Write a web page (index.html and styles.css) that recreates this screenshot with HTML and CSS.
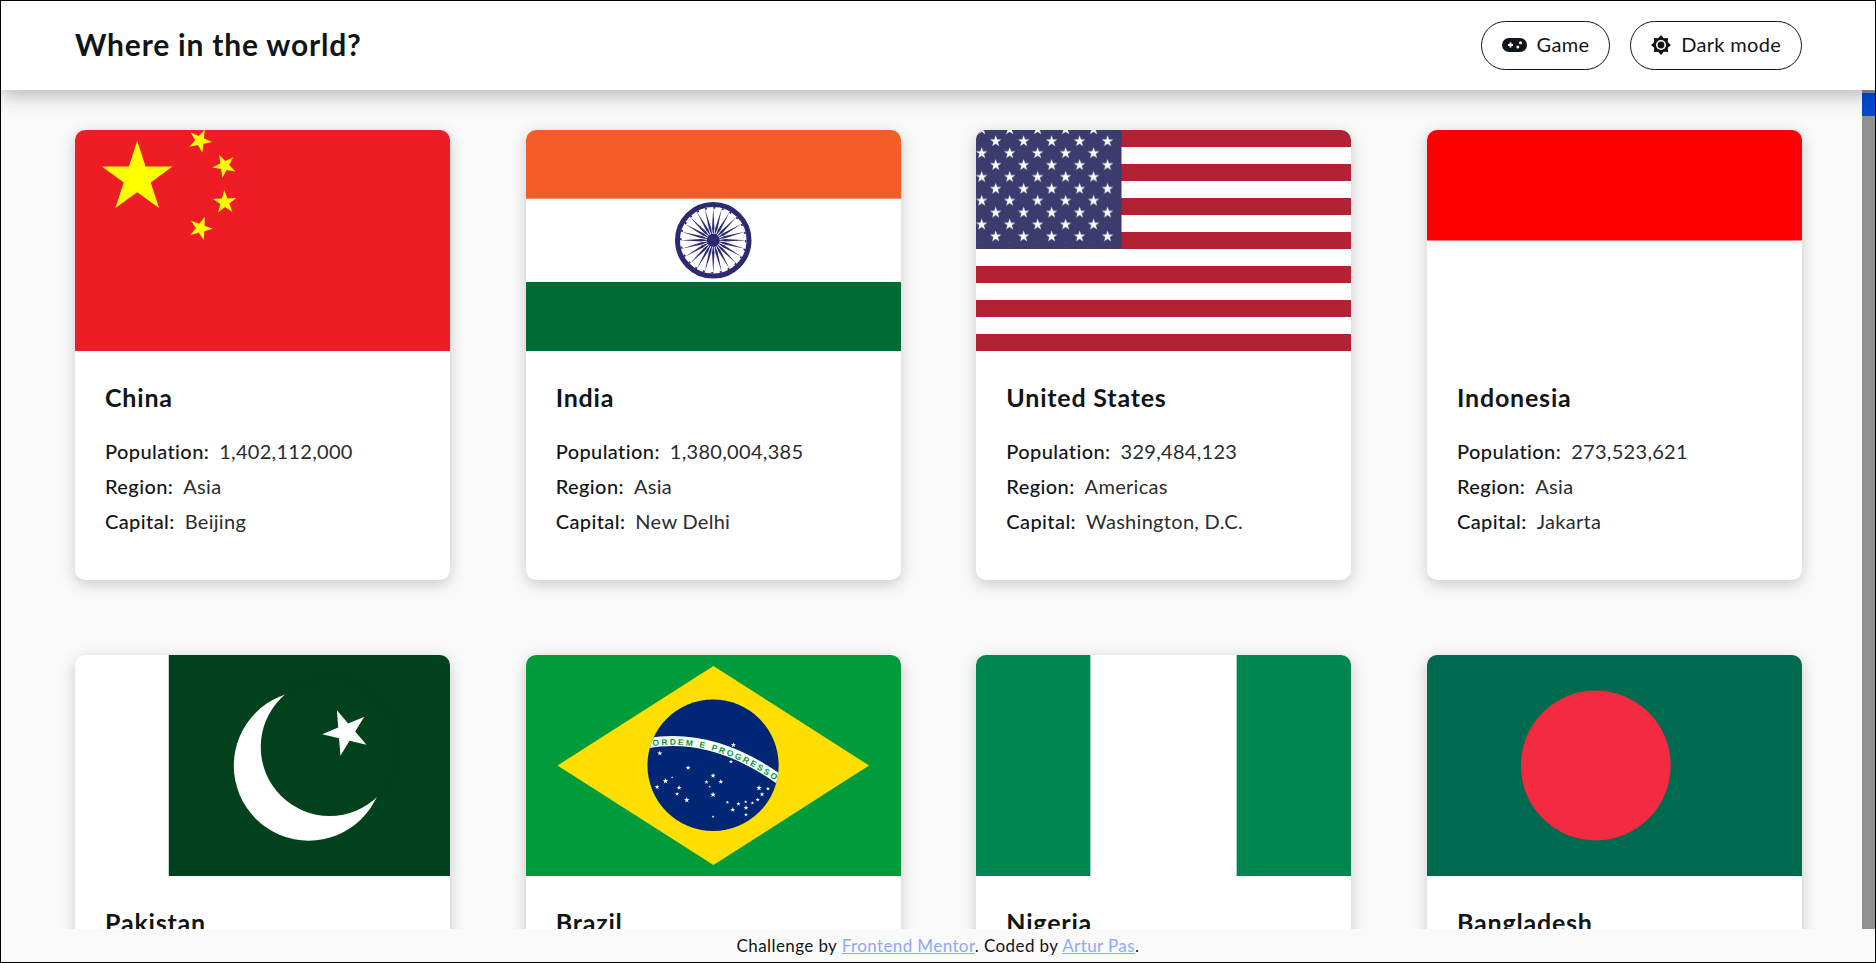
FILE: index.html
```html
<!DOCTYPE html>
<html lang="en">
<head>
    <meta charset="UTF-8">
    <meta name="viewport" content="width=device-width, initial-scale=1.0">
    <title>Where in the world?</title>
    <link rel="stylesheet" href="styles.css">
</head>
<body>

<div class="frame">
    <header class="topbar">
        <h1 class="logo">Where in the world?</h1>
        <nav class="actions">
            <button class="pill">
                <svg class="pill-icon" width="25" height="14" viewBox="0 0 25 14">
                    <rect width="25" height="14" rx="7" fill="#111517"/>
                    <path d="M6 7h5M8.5 4.5v5" stroke="#fff" stroke-width="1.8"/>
                    <circle cx="18.5" cy="4.8" r="1.5" fill="#fff"/>
                    <circle cx="15.8" cy="9" r="1.5" fill="#fff"/>
                </svg>
                Game
            </button>
            <button class="pill">
                <svg class="pill-icon" width="20" height="20" viewBox="-10 -10 20 20">
                    <polygon fill="#111517" points="0,-10 2.8,-6.8 7.1,-7.1 6.8,-2.8 10,0 6.8,2.8 7.1,7.1 2.8,6.8 0,10 -2.8,6.8 -7.1,7.1 -6.8,2.8 -10,0 -6.8,-2.8 -7.1,-7.1 -2.8,-6.8"/>
                    <circle r="5" fill="#fff"/>
                    <circle r="3.4" fill="#111517"/>
                </svg>
                Dark mode
            </button>
        </nav>
    </header>

    <div class="middle">
        <main class="content">
            <section class="grid">

                <article class="card">
                    <svg class="flag" viewBox="0 0 375.5 221" preserveAspectRatio="none">
                        <defs>
                            <polygon id="star" points="0,-1 .2245,-.309 .951,-.309 .363,.118 .588,.809 0,.382 -.588,.809 -.363,.118 -.951,-.309 -.2245,-.309"/>
                            <polygon id="spoke" points="0,-33 1.2,-12 0,-4 -1.2,-12"/>
                        </defs>
                        <rect width="375.5" height="221" fill="#ee1c25"/>
                        <g fill="#ff0">
                            <use href="#star" transform="translate(62.3 48) scale(37.2)"/>
                            <use href="#star" transform="translate(125 10.7) rotate(24) scale(12.3)"/>
                            <use href="#star" transform="translate(149.7 35.7) rotate(-26) scale(12.3)"/>
                            <use href="#star" transform="translate(150 72.3) rotate(-2.5) scale(12.3)"/>
                            <use href="#star" transform="translate(125.7 98.3) rotate(20.4) scale(12.3)"/>
                        </g>
                    </svg>
                    <div class="card-body">
                        <h2 class="country">China</h2>
                        <p class="fact"><b>Population:</b>1,402,112,000</p>
                        <p class="fact"><b>Region:</b>Asia</p>
                        <p class="fact"><b>Capital:</b>Beijing</p>
                    </div>
                </article>

                <article class="card">
                    <svg class="flag" viewBox="0 0 375.5 221" preserveAspectRatio="none">
                        <rect width="375.5" height="221" fill="#fff"/>
                        <rect width="375.5" height="68.7" fill="#f35d27"/>
                        <rect y="152" width="375.5" height="69" fill="#006b35"/>
                        <g transform="translate(187.5 110.3)" fill="#2b2a72">
                            <circle r="35.8" fill="none" stroke="#2b2a72" stroke-width="5"/>
                            <circle r="32.5" fill="none" stroke="#2b2a72" stroke-width="1.6" stroke-dasharray="2 6.5"/>
                            <circle r="6.5"/>
                            <use href="#spoke"/>
                            <use href="#spoke" transform="rotate(15)"/>
                            <use href="#spoke" transform="rotate(30)"/>
                            <use href="#spoke" transform="rotate(45)"/>
                            <use href="#spoke" transform="rotate(60)"/>
                            <use href="#spoke" transform="rotate(75)"/>
                            <use href="#spoke" transform="rotate(90)"/>
                            <use href="#spoke" transform="rotate(105)"/>
                            <use href="#spoke" transform="rotate(120)"/>
                            <use href="#spoke" transform="rotate(135)"/>
                            <use href="#spoke" transform="rotate(150)"/>
                            <use href="#spoke" transform="rotate(165)"/>
                            <use href="#spoke" transform="rotate(180)"/>
                            <use href="#spoke" transform="rotate(195)"/>
                            <use href="#spoke" transform="rotate(210)"/>
                            <use href="#spoke" transform="rotate(225)"/>
                            <use href="#spoke" transform="rotate(240)"/>
                            <use href="#spoke" transform="rotate(255)"/>
                            <use href="#spoke" transform="rotate(270)"/>
                            <use href="#spoke" transform="rotate(285)"/>
                            <use href="#spoke" transform="rotate(300)"/>
                            <use href="#spoke" transform="rotate(315)"/>
                            <use href="#spoke" transform="rotate(330)"/>
                            <use href="#spoke" transform="rotate(345)"/>
                        </g>
                    </svg>
                    <div class="card-body">
                        <h2 class="country">India</h2>
                        <p class="fact"><b>Population:</b>1,380,004,385</p>
                        <p class="fact"><b>Region:</b>Asia</p>
                        <p class="fact"><b>Capital:</b>New Delhi</p>
                    </div>
                </article>

                <article class="card">
                    <svg class="flag" viewBox="0 0 375.5 221" preserveAspectRatio="none">
                        <defs>
                            <pattern id="usStars" x="-1" y="5" width="28" height="23.8" patternUnits="userSpaceOnUse">
                                <use href="#star" fill="#fff" transform="translate(20.7 6.3) scale(6)"/>
                                <use href="#star" fill="#fff" transform="translate(6.7 18.2) scale(6)"/>
                            </pattern>
                        </defs>
                        <rect width="375.5" height="221" fill="#fff"/>
                        <path fill="#b22234" d="M0 0h375.5v17H0zM0 34h375.5v17H0zM0 68h375.5v17H0zM0 102h375.5v17H0zM0 136h375.5v17H0zM0 170h375.5v17H0zM0 204h375.5v17H0z"/>
                        <rect width="145.7" height="119" fill="#3c3b6e"/>
                        <rect width="139" height="113" fill="url(#usStars)"/>
                    </svg>
                    <div class="card-body">
                        <h2 class="country">United States</h2>
                        <p class="fact"><b>Population:</b>329,484,123</p>
                        <p class="fact"><b>Region:</b>Americas</p>
                        <p class="fact"><b>Capital:</b>Washington, D.C.</p>
                    </div>
                </article>

                <article class="card">
                    <svg class="flag" viewBox="0 0 375.5 221" preserveAspectRatio="none">
                        <rect width="375.5" height="221" fill="#fff"/>
                        <rect width="375.5" height="110.5" fill="#f00"/>
                    </svg>
                    <div class="card-body">
                        <h2 class="country">Indonesia</h2>
                        <p class="fact"><b>Population:</b>273,523,621</p>
                        <p class="fact"><b>Region:</b>Asia</p>
                        <p class="fact"><b>Capital:</b>Jakarta</p>
                    </div>
                </article>

                <article class="card">
                    <svg class="flag" viewBox="0 0 375.5 221" preserveAspectRatio="none">
                        <rect width="375.5" height="221" fill="#fff"/>
                        <rect x="93.9" width="281.6" height="221" fill="#01411c"/>
                        <circle cx="234" cy="110.7" r="75" fill="#fff"/>
                        <circle cx="255" cy="92" r="69" fill="#01411c"/>
                        <use href="#star" fill="#fff" transform="translate(271.4 77.3) rotate(-22.5) scale(24)"/>
                    </svg>
                    <div class="card-body">
                        <h2 class="country">Pakistan</h2>
                    </div>
                </article>

                <article class="card">
                    <svg class="flag" viewBox="0 0 375.5 221" preserveAspectRatio="none">
                        <defs>
                            <clipPath id="globe"><circle cx="187.3" cy="110.3" r="65.7"/></clipPath>
                            <path id="bandLine" d="M120 88.5Q187 76 256 126"/>
                            <path id="textLine" d="M127 91Q187 83.6 247 124"/>
                        </defs>
                        <rect width="375.5" height="221" fill="#009b3a"/>
                        <polygon points="187.7,11 343.5,110.5 187.7,210 31.5,110.5" fill="#fedf00"/>
                        <circle cx="187.3" cy="110.3" r="65.7" fill="#002776"/>
                        <g clip-path="url(#globe)">
                            <use href="#bandLine" fill="none" stroke="#fff" stroke-width="10"/>
                        </g>
                        <text class="motto"><textPath href="#textLine" textLength="130" lengthAdjust="spacing">ORDEM E PROGRESSO</textPath></text>
                        <g fill="#fff">
                            <use href="#star" transform="translate(207.7 90) scale(2.8)"/>
                            <use href="#star" transform="translate(134 98.3) scale(2.8)"/>
                            <use href="#star" transform="translate(205.3 106.7) scale(2.3)"/>
                            <use href="#star" transform="translate(162.3 112.7) scale(2.6)"/>
                            <use href="#star" transform="translate(187.3 120.7) scale(2.8)"/>
                            <use href="#star" transform="translate(146.3 122.3) scale(1.3)"/>
                            <use href="#star" transform="translate(139.7 126) scale(3)"/>
                            <use href="#star" transform="translate(180.7 127) scale(2.3)"/>
                            <use href="#star" transform="translate(195 126.7) scale(2.6)"/>
                            <use href="#star" transform="translate(131.3 132) scale(2.6)"/>
                            <use href="#star" transform="translate(153.3 132.7) scale(2.6)"/>
                            <use href="#star" transform="translate(184 131.7) scale(1.3)"/>
                            <use href="#star" transform="translate(233.3 133) scale(3)"/>
                            <use href="#star" transform="translate(242.3 133.7) scale(2.3)"/>
                            <use href="#star" transform="translate(151.3 139) scale(2.2)"/>
                            <use href="#star" transform="translate(187.3 139.7) scale(3)"/>
                            <use href="#star" transform="translate(236.3 139.3) scale(2.6)"/>
                            <use href="#star" transform="translate(201.7 147.3) scale(1.9)"/>
                            <use href="#star" transform="translate(161 145) scale(3)"/>
                            <use href="#star" transform="translate(232 144.7) scale(2.3)"/>
                            <use href="#star" transform="translate(212.7 149) scale(2.2)"/>
                            <use href="#star" transform="translate(220 146.7) scale(1.8)"/>
                            <use href="#star" transform="translate(226.7 148) scale(2)"/>
                            <use href="#star" transform="translate(220.3 152.7) scale(2.6)"/>
                            <use href="#star" transform="translate(207 154.7) scale(2.6)"/>
                            <use href="#star" transform="translate(220.3 159.7) scale(2.1)"/>
                            <use href="#star" transform="translate(187.3 161.7) scale(1.6)"/>
                        </g>
                    </svg>
                    <div class="card-body">
                        <h2 class="country">Brazil</h2>
                    </div>
                </article>

                <article class="card">
                    <svg class="flag" viewBox="0 0 375.5 221" preserveAspectRatio="none">
                        <rect width="375.5" height="221" fill="#008751"/>
                        <rect x="114.5" width="146.5" height="221" fill="#fff"/>
                    </svg>
                    <div class="card-body">
                        <h2 class="country">Nigeria</h2>
                    </div>
                </article>

                <article class="card">
                    <svg class="flag" viewBox="0 0 375.5 221" preserveAspectRatio="none">
                        <rect width="375.5" height="221" fill="#006a4e"/>
                        <circle cx="169" cy="110.5" r="75" fill="#f42a41"/>
                    </svg>
                    <div class="card-body">
                        <h2 class="country">Bangladesh</h2>
                    </div>
                </article>

            </section>
        </main>
        <div class="scrollbar"><div class="thumb"></div></div>
    </div>

    <footer class="credit">
        Challenge by <a href="#">Frontend Mentor</a>. Coded by <a href="#">Artur Pas</a>.
    </footer>
</div>

</body>
</html>
```

FILE: styles.css
```css
* {
    box-sizing: border-box;
}
html, body {
    margin: 0;
    height: 100%;
    overflow: hidden;
}
body {
    font-family: Lato, "Open Sans", sans-serif;
    color: #111517;
    background-color: #fafafa;
}
.frame {
    display: flex;
    flex-direction: column;
    height: 963px;
    border: 1px solid #000;
}
.topbar {
    position: relative;
    z-index: 2;
    flex: none;
    display: flex;
    align-items: center;
    justify-content: space-between;
    height: 89px;
    padding: 0 73px 0 74px;
    background-color: #fff;
    box-shadow: 0 4px 20px rgba(0, 0, 0, 0.3);
}
.logo {
    margin: 0 0 4px;
    font-size: 30px;
    font-weight: 700;
    letter-spacing: 0.8px;
}
.actions {
    display: flex;
    gap: 20px;
}
.pill {
    display: flex;
    align-items: center;
    gap: 10px;
    height: 49px;
    padding: 0 20px 3px;
    font-family: inherit;
    font-size: 20px;
    letter-spacing: 0.3px;
    color: #111517;
    background-color: #fff;
    border: 1px solid #111517;
    border-radius: 25px;
}
.pill-icon {
    flex: none;
    margin-top: 2px;
}
.middle {
    flex: 1;
    display: flex;
    min-height: 0;
}
.content {
    flex: 1;
    min-width: 0;
    padding: 40px 60px 0 74px;
    overflow: hidden;
}
.grid {
    display: grid;
    grid-template-columns: repeat(4, 375px);
    justify-content: space-between;
    row-gap: 75px;
}
.card {
    height: 450px;
    background-color: #fff;
    border-radius: 10px;
    box-shadow: 0 4px 16px rgba(0, 0, 0, 0.2);
    overflow: hidden;
}
.flag {
    display: block;
    width: 100%;
    height: 221px;
}
.motto {
    font-family: "Liberation Sans", sans-serif;
    font-size: 8.5px;
    font-weight: 700;
    fill: #009b3a;
}
.card-body {
    padding: 31px 30px 0;
}
.country {
    margin: 0 0 22px;
    font-size: 25px;
    line-height: 30px;
    font-weight: 700;
    letter-spacing: 0.8px;
}
.fact {
    margin: 0;
    font-size: 20px;
    line-height: 35px;
    letter-spacing: 0.3px;
    color: #2a2d2f;
}
.fact b {
    margin-right: 10px;
    font-weight: 500;
    letter-spacing: 0.4px;
    color: #111517;
}
.scrollbar {
    flex: none;
    width: 13px;
    padding-top: 3px;
    background-color: #909090;
}
.thumb {
    height: 23px;
    background-color: #0348cf;
}
.credit {
    position: relative;
    z-index: 1;
    flex: none;
    height: 33px;
    font-size: 17px;
    line-height: 33px;
    letter-spacing: 0.4px;
    text-align: center;
    background-color: #fafafa;
}
.credit a {
    color: #8fa8ff;
}
```
